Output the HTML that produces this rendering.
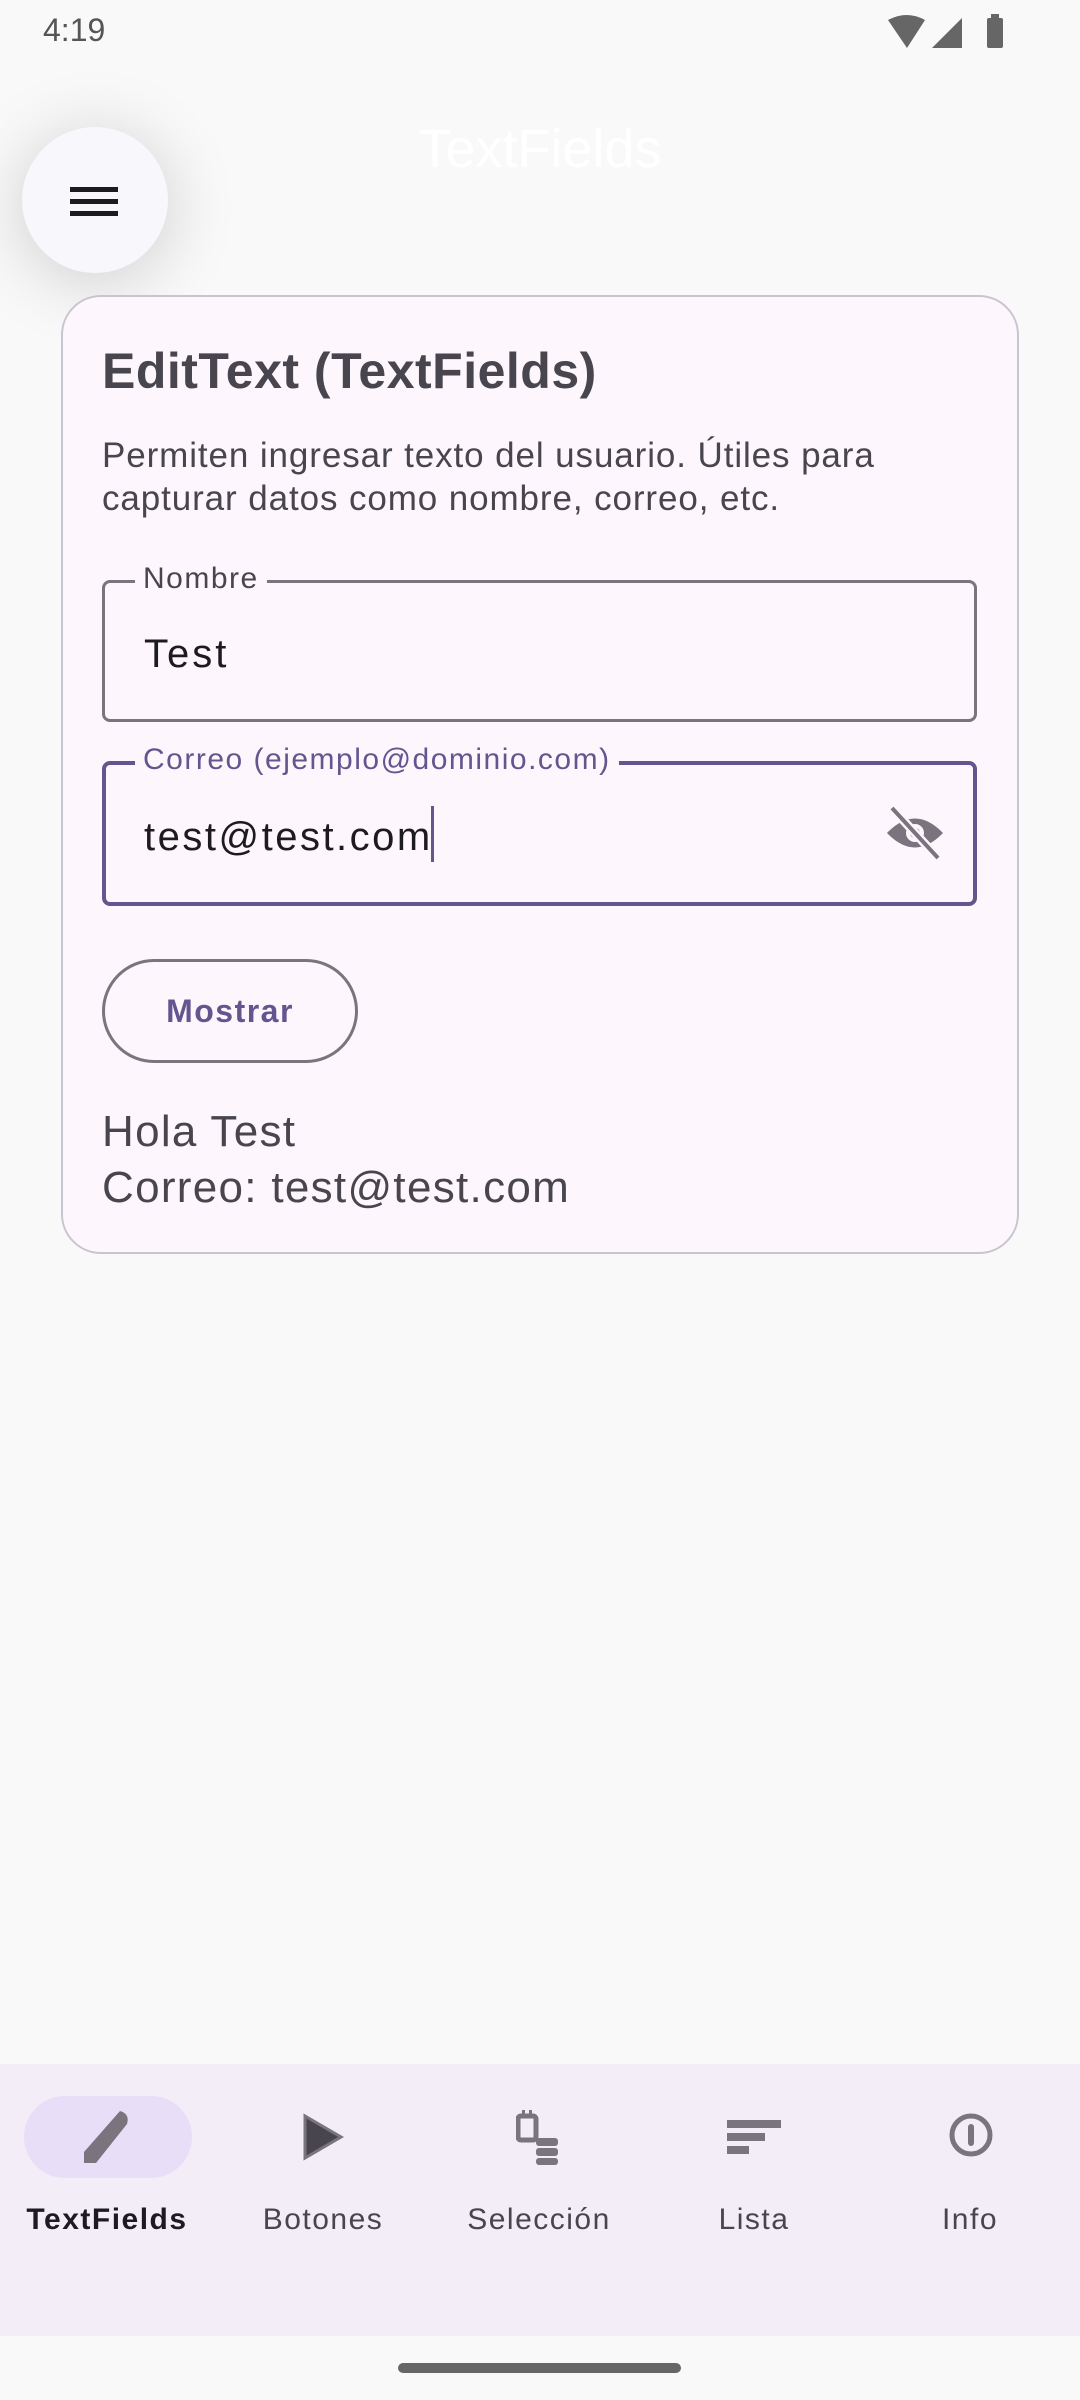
<!DOCTYPE html>
<html><head><meta charset="utf-8"><style>
*{margin:0;padding:0;box-sizing:border-box}
body{width:1080px;height:2400px;background:#f9f9f9;font-family:"Liberation Sans",sans-serif;position:relative;overflow:hidden}
.a{position:absolute;white-space:nowrap}
</style></head><body>
<div class="a" style="left:43px;top:12px;font-size:32px;color:#555">4:19</div>
<svg class="a" style="left:885px;top:12px" width="130" height="40" viewBox="0 0 130 40">
<path d="M3 8 Q22 -2 40 8 L22 36 Z" fill="#666"/>
<path d="M77 6 L77 36 L47 36 Z" fill="#666"/>
<rect x="102" y="6" width="16" height="30" rx="2" fill="#666"/><rect x="106" y="2" width="8" height="5" fill="#666"/>
</svg>
<div class="a" style="left:0;width:1080px;top:118px;text-align:center;font-size:54px;color:#fff">TextFields</div>
<div class="a" style="left:22px;top:127px;width:146px;height:146px;border-radius:50%;background:#f7f7fc;box-shadow:0 8px 70px rgba(0,0,0,0.18)"></div>
<svg class="a" style="left:70px;top:184px" width="50" height="36"><rect x="0" y="3" width="48" height="5" fill="#1d1b20"/><rect x="0" y="15" width="48" height="5" fill="#1d1b20"/><rect x="0" y="27" width="48" height="5" fill="#1d1b20"/></svg>
<div class="a" style="left:61px;top:295px;width:958px;height:959px;border:2px solid #cac4d0;border-radius:40px;background:#fdf7fd"></div>
<div class="a" style="left:102px;top:342px;font-size:50px;font-weight:bold;color:#49454f;letter-spacing:0.5px">EditText (TextFields)</div>
<div class="a" style="left:102px;top:434px;font-size:35px;line-height:43px;color:#49454f;letter-spacing:0.9px">Permiten ingresar texto del usuario. Útiles para<br>capturar datos como nombre, correo, etc.</div>
<div class="a" style="left:102px;top:580px;width:875px;height:142px;border:3px solid #79747e;border-radius:8px"></div>
<div class="a" style="left:135px;top:562px;padding:0 8px;background:#fdf7fd;font-size:30px;color:#49454f;letter-spacing:1.5px">Nombre</div>
<div class="a" style="left:144px;top:632px;font-size:40px;color:#1d1b20;letter-spacing:3px">Test</div>
<div class="a" style="left:102px;top:761px;width:875px;height:145px;border:4px solid #65558f;border-radius:8px"></div>
<div class="a" style="left:135px;top:743px;padding:0 8px;background:#fdf7fd;font-size:30px;color:#65558f;letter-spacing:1.5px">Correo (ejemplo@dominio.com)</div>
<div class="a" style="left:144px;top:806px;font-size:40px;color:#1d1b20;letter-spacing:2.5px">test@test.com<span style="display:inline-block;width:3px;height:56px;background:#65558f;vertical-align:-12px;margin-left:-2px"></span></div>
<svg class="a" style="left:884px;top:804px" width="62" height="58" viewBox="0 0 62 58">
<path d="M3 29 Q31 0 59 29 Q31 58 3 29Z" fill="#79747e"/><circle cx="31" cy="29" r="9" fill="#fdf7fd"/><circle cx="31" cy="29" r="5" fill="#79747e"/>
<path d="M8 4 L54 54" stroke="#fdf7fd" stroke-width="9"/><path d="M8 4 L54 54" stroke="#79747e" stroke-width="4"/>
</svg>
<div class="a" style="left:102px;top:959px;width:256px;height:104px;border:3px solid #79747e;border-radius:52px;text-align:center;line-height:98px;font-size:32px;font-weight:bold;color:#65558f;letter-spacing:1.5px">Mostrar</div>
<div class="a" style="left:102px;top:1104px;font-size:44px;line-height:56px;color:#49454f;letter-spacing:1.3px">Hola Test<br>Correo: test@test.com</div>
<div class="a" style="left:0;top:2064px;width:1080px;height:272px;background:#f3edf7"></div>
<div class="a" style="left:24px;top:2096px;width:168px;height:82px;border-radius:41px;background:#e8def8"></div>
<svg class="a" style="left:78px;top:2108px" width="58" height="58" viewBox="0 0 58 58"><path d="M42 3 Q52 6 49 16 L18 55 L6 55 L6 44 Z" fill="#79747e"/></svg>
<svg class="a" style="left:300px;top:2113px" width="46" height="48"><path d="M5 3 L41 24 L5 45Z" fill="#49454f" stroke="#79747e" stroke-width="3"/></svg>
<svg class="a" style="left:516px;top:2108px" width="46" height="58"><rect x="2" y="8" width="18" height="24" rx="3" fill="none" stroke="#79747e" stroke-width="5"/><rect x="6" y="2" width="3" height="8" fill="#79747e"/><rect x="13" y="2" width="3" height="8" fill="#79747e"/><rect x="20" y="30" width="22" height="8" rx="3" fill="#79747e"/><rect x="20" y="40" width="22" height="8" rx="3" fill="#79747e"/><rect x="20" y="50" width="22" height="7" rx="3" fill="#79747e"/></svg>
<svg class="a" style="left:727px;top:2118px" width="56" height="40"><rect x="0" y="2" width="54" height="8" fill="#79747e"/><rect x="0" y="15" width="38" height="8" fill="#79747e"/><rect x="0" y="28" width="22" height="8" fill="#79747e"/></svg>
<svg class="a" style="left:948px;top:2112px" width="46" height="46"><circle cx="23" cy="23" r="19" fill="none" stroke="#79747e" stroke-width="5"/><rect x="20" y="12" width="6" height="22" rx="3" fill="#79747e"/></svg>
<div class="a" style="left:7px;width:200px;top:2203px;text-align:center;font-size:30px;font-weight:bold;color:#1d1b20;letter-spacing:1.5px">TextFields</div>
<div class="a" style="left:223px;width:200px;top:2203px;text-align:center;font-size:30px;color:#49454f;letter-spacing:1.5px">Botones</div>
<div class="a" style="left:439px;width:200px;top:2203px;text-align:center;font-size:30px;color:#49454f;letter-spacing:1.5px">Selección</div>
<div class="a" style="left:654px;width:200px;top:2203px;text-align:center;font-size:30px;color:#49454f;letter-spacing:1.5px">Lista</div>
<div class="a" style="left:870px;width:200px;top:2203px;text-align:center;font-size:30px;color:#49454f;letter-spacing:1.5px">Info</div>
<div class="a" style="left:398px;top:2363px;width:283px;height:10px;border-radius:5px;background:#666"></div>
</body></html>
